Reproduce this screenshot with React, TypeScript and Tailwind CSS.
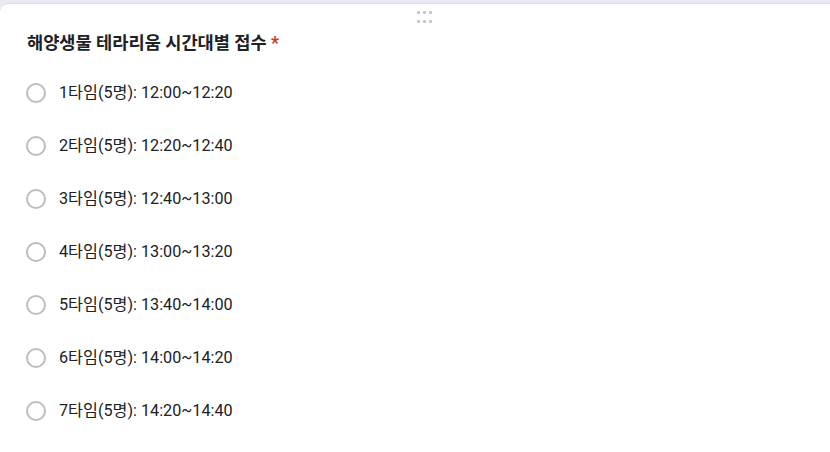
import React from "react";

const options = [
  "1타임(5명): 12:00~12:20",
  "2타임(5명): 12:20~12:40",
  "3타임(5명): 12:40~13:00",
  "4타임(5명): 13:00~13:20",
  "5타임(5명): 13:40~14:00",
  "6타임(5명): 14:00~14:20",
  "7타임(5명): 14:20~14:40",
];

export default function App() {
  return (
    <div
      className="w-[830px] h-[452px] bg-[#ece9f4] pt-[3px] overflow-hidden"
      style={{ fontFamily: 'Roboto, "Noto Sans CJK KR", sans-serif' }}
    >
      <div className="h-[449px] bg-white rounded-tl-[8px] border-t border-[#dadce0] flex flex-col">
        <div className="flex justify-center pl-[18px] pt-[7px] h-[22px]">
          <div className="grid grid-cols-3 gap-x-[3px] gap-y-[3px]">
            {Array.from({ length: 6 }).map((_, i) => (
              <div key={i} className="w-[3px] h-[3px] bg-[#c4c4c4] rounded-[1px]" />
            ))}
          </div>
        </div>
        <div className="pl-[27px] pt-[5px] text-[17.6px] font-bold text-[#202124] leading-[24px]">
          해양생물 테라리움 시간대별 접수 <span className="text-[#d93025]">*</span>
        </div>
        <div className="flex flex-col pl-[26px] pt-[26px] gap-[29px]">
          {options.map((o) => (
            <div key={o} className="flex items-center h-[24px]">
              <div className="w-[20px] h-[20px] rounded-full border-2 border-[#bdbdbd]" />
              <span className="ml-[13px] text-[16.2px] text-[#202124]">{o}</span>
            </div>
          ))}
        </div>
      </div>
    </div>
  );
}
